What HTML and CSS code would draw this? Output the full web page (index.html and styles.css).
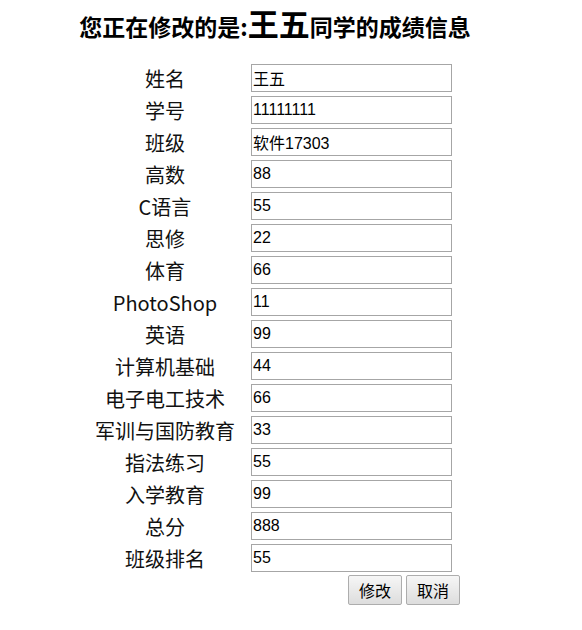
FILE: index.html
```html
<!DOCTYPE html>
<html lang="zh-CN">
<head>
<meta charset="utf-8">
<title>修改成绩</title>
<link rel="stylesheet" href="styles.css">
</head>
<body>
<div class="page">
  <h2 class="title"><span>您正在修改的是:</span><span class="name">王五</span><span>同学的成绩信息</span></h2>
  <form class="form">
    <label class="label">姓名</label><div class="cell"><input class="field" value="王五"></div>
    <label class="label">学号</label><div class="cell"><input class="field" value="11111111"></div>
    <label class="label">班级</label><div class="cell"><input class="field" value="软件17303"></div>
    <label class="label">高数</label><div class="cell"><input class="field" value="88"></div>
    <label class="label">C语言</label><div class="cell"><input class="field" value="55"></div>
    <label class="label">思修</label><div class="cell"><input class="field" value="22"></div>
    <label class="label">体育</label><div class="cell"><input class="field" value="66"></div>
    <label class="label">PhotoShop</label><div class="cell"><input class="field" value="11"></div>
    <label class="label">英语</label><div class="cell"><input class="field" value="99"></div>
    <label class="label">计算机基础</label><div class="cell"><input class="field" value="44"></div>
    <label class="label">电子电工技术</label><div class="cell"><input class="field" value="66"></div>
    <label class="label">军训与国防教育</label><div class="cell"><input class="field" value="33"></div>
    <label class="label">指法练习</label><div class="cell"><input class="field" value="55"></div>
    <label class="label">入学教育</label><div class="cell"><input class="field" value="99"></div>
    <label class="label">总分</label><div class="cell"><input class="field" value="888"></div>
    <label class="label">班级排名</label><div class="cell"><input class="field" value="55"></div>
    <div class="actions">
      <button type="button" class="btn">修改</button>
      <button type="button" class="btn">取消</button>
    </div>
  </form>
</div>
</body>
</html>
```
FILE: styles.css
```css
html, body {
  margin: 0;
  padding: 0;
  background: #fff;
}
body {
  font-family: "Noto Sans CJK SC", "Noto Sans", sans-serif;
  color: #000;
}
.page {
  width: 550px;
}
.title {
  margin: 0;
  height: 45px;
  box-sizing: border-box;
  display: flex;
  justify-content: center;
  align-items: baseline;
  font-size: 23px;
  font-weight: bold;
  line-height: 32px;
}
.name {
  font-size: 31px;
  line-height: normal;
}
.form {
  margin: 17px auto 0;
  width: 370px;
  display: grid;
  grid-template-columns: 150px 220px;
  grid-auto-rows: 32px;
}
.label {
  text-align: center;
  font-size: 20px;
  line-height: 34px;
  white-space: nowrap;
  color: #111;
}
.cell {
  display: flex;
  align-items: center;
  padding-left: 11px;
}
.field {
  width: 201px;
  height: 28px;
  box-sizing: border-box;
  border: 1px solid #a6a6a6;
  padding: 0 1px;
  margin: 0;
  font-family: "Liberation Sans", "Noto Sans CJK SC", sans-serif;
  font-size: 16px;
  color: #000;
  background: #fff;
  outline: none;
}
.actions {
  grid-column: 2;
  display: flex;
  justify-content: flex-end;
  gap: 4px;
  padding-top: 1px;
}
.btn {
  height: 30px;
  box-sizing: border-box;
  border: 1px solid #adadad;
  border-radius: 2px;
  background: linear-gradient(#f6f6f6, #dddddd);
  font-family: "Noto Sans CJK SC", sans-serif;
  font-size: 16px;
  line-height: 26px;
  padding: 0 10px;
  margin: 0;
  color: #000;
}
```
